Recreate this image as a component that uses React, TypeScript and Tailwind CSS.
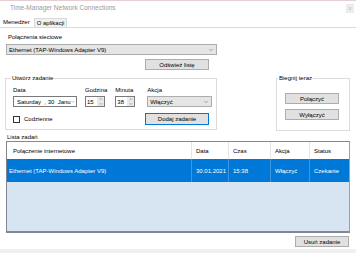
import { ChevronDown, ChevronUp } from 'lucide-react';

const font = { fontFamily: '"Liberation Sans", Arial, sans-serif' };

function Button({ label, focused = false, className = '' }: { label: string; focused?: boolean; className?: string }) {
  return (
    <div
      className={`flex h-[11px] items-center justify-center border bg-[#e1e1e1] text-[6px] leading-none text-black ${
        focused ? 'border-[#0078d7]' : 'border-[#adadad]'
      } ${className}`}
    >
      {label}
    </div>
  );
}

function Combo({ value, className = '' }: { value: string; className?: string }) {
  return (
    <div className={`flex h-[11px] items-center justify-between border border-[#adadad] bg-[#e5e5e5] pl-[2px] pr-[2px] ${className}`}>
      <span className="text-[6px] leading-none text-black">{value}</span>
      <ChevronDown className="h-[6px] w-[6px] text-[#606060]" strokeWidth={2} />
    </div>
  );
}

function Spinner({ value }: { value: string }) {
  return (
    <div className="flex h-[11px] w-[20px] items-stretch border border-[#7a7a7a] bg-white">
      <span className="flex flex-1 items-center pl-[1px] text-[6px] leading-none">{value}</span>
      <div className="flex w-[7px] flex-col bg-[#e8e8e8]">
        <div className="flex flex-1 items-center justify-center">
          <ChevronUp className="h-[4px] w-[4px] text-[#606060]" strokeWidth={3} />
        </div>
        <div className="flex flex-1 items-center justify-center">
          <ChevronDown className="h-[4px] w-[4px] text-[#606060]" strokeWidth={3} />
        </div>
      </div>
    </div>
  );
}

function Label({ text, className = '' }: { text: string; className?: string }) {
  return <div className={`h-[8px] text-[6px] leading-[8px] text-black ${className}`}>{text}</div>;
}

const columns = [
  { title: 'Połączenie internetowe', value: 'Ethernet (TAP-Windows Adapter V9)', w: 'w-[185px]' },
  { title: 'Data', value: '30.01.2021', w: 'w-[37px]' },
  { title: 'Czas', value: '15:38', w: 'w-[42px]' },
  { title: 'Akcja', value: 'Włączyć', w: 'w-[39px]' },
  { title: 'Status', value: 'Czekanie', w: 'flex-1' },
];

export default function App() {
  return (
    <div className="flex h-[253px] w-[356px] flex-col overflow-hidden border-t border-[#e6cfd3] bg-white" style={font}>
      {/* Title bar */}
      <div className="flex h-[15px] items-center justify-between pl-[10px] pr-[2px]">
        <span className="text-[6.5px] leading-none text-[#9a9a9a]">Time-Manager Network Connections</span>
        <div className="flex h-[9px] w-[8px] items-center justify-center bg-[#ececec] text-[5px] leading-none text-[#b0b0b0]">
          x
        </div>
      </div>

      {/* Tabs */}
      <div className="flex h-[11px] items-end pl-[2px]">
        <div className="flex h-[11px] items-center px-[1px] text-[6px] leading-none text-black">Menedżer</div>
        <div className="ml-[3px] flex h-[9px] items-center border border-b-0 border-[#d9d9d9] bg-[#f0f0f0] px-[2px] text-[6px] leading-none text-black">
          O aplikacji
        </div>
      </div>

      {/* Tab page */}
      <div className="flex flex-1 flex-col border-t border-[#dadada]">
        <Label text="Połączenia sieciowe" className="ml-[8px] mt-[5px]" />
        <Combo value="Ethernet (TAP-Windows Adapter V9)" className="ml-[6px] mt-[3px] w-[211px]" />
        <Button label="Odśwież listę" className="ml-[145px] mt-[4px] w-[64px]" />

        <div className="mt-[8px] flex items-start">
          {/* Utwórz zadanie */}
          <div className="relative ml-[5px] flex h-[52px] w-[212px] flex-col border border-[#dcdcdc] pt-[7px]">
            <span className="absolute -top-[5px] left-[5px] bg-white px-[1px] text-[6px] leading-[8px] text-black">Utwórz zadanie</span>
            <div className="flex items-start">
              <div className="ml-[7px] flex w-[64px] flex-col">
                <Label text="Data" />
                <div className="mt-[2px] flex h-[11px] items-center justify-between border border-[#7a7a7a] bg-white pl-[3px] pr-[1px]">
                  <span className="whitespace-pre text-[6px] leading-none">Saturday  , 30  Janu</span>
                  <ChevronDown className="h-[6px] w-[6px] text-[#606060]" strokeWidth={2} />
                </div>
              </div>
              <div className="ml-[8px] flex flex-col">
                <Label text="Godzina" />
                <div className="mt-[2px]">
                  <Spinner value="15" />
                </div>
              </div>
              <div className="ml-[8px] flex flex-col">
                <Label text="Minuta" />
                <div className="mt-[2px]">
                  <Spinner value="38" />
                </div>
              </div>
              <div className="ml-[12px] flex flex-col">
                <Label text="Akcja" />
                <Combo value="Włączyć" className="mt-[2px] w-[65px]" />
              </div>
            </div>
            <div className="mt-[6px] flex items-center">
              <div className="ml-[7px] flex items-center">
                <div className="h-[7px] w-[7px] border border-[#333] bg-white" />
                <span className="ml-[4px] text-[6px] leading-none">Codzienne</span>
              </div>
              <Button label="Dodaj zadanie" focused className="ml-auto mr-[7px] h-[12px] w-[64px]" />
            </div>
          </div>

          {/* Biegnij teraz */}
          <div className="relative ml-[59px] flex h-[53px] w-[74px] flex-col border border-[#dcdcdc] pt-[14px]">
            <span className="absolute -top-[5px] left-[1px] bg-white px-[1px] text-[6px] leading-[8px] text-black">Biegnij teraz</span>
            <Button label="Połączyć" className="ml-[8px] w-[54px]" />
            <Button label="Wyłączyć" className="ml-[8px] mt-[5px] w-[54px]" />
          </div>
        </div>

        <Label text="Lista zadań" className="ml-[7px] mt-[2px]" />

        {/* List view */}
        <div className="ml-[6px] flex h-[92px] w-[344px] flex-col border border-[#828790] border-b-2 border-r-[#a0a0a0] bg-[#d7e5f2]">
          <div className="flex h-[17px] bg-white">
            {columns.map((c, i) => (
              <div
                key={c.title}
                className={`flex items-center ${c.w} ${i === 0 ? 'pl-[6px]' : 'pl-[4px]'} ${
                  i < columns.length - 1 ? 'border-r border-[#e5e5e5]' : ''
                } text-[6px] leading-none text-black`}
              >
                {c.title}
              </div>
            ))}
          </div>
          <div className="flex h-[23px] bg-[#0078d7]">
            {columns.map((c, i) => (
              <div
                key={c.title}
                className={`flex items-center ${c.w} ${i === 0 ? 'pl-[2px]' : 'pl-[4px]'} ${
                  i < columns.length - 1 ? 'border-r border-[#3d97e0]' : ''
                } text-[6px] leading-none text-white`}
              >
                {c.value}
              </div>
            ))}
          </div>
        </div>

        <Button label="Usuń zadanie" className="ml-[295px] mt-[3px] w-[54px]" />
      </div>

      <div className="h-[4px] bg-[#f0f0f0]" />
    </div>
  );
}
